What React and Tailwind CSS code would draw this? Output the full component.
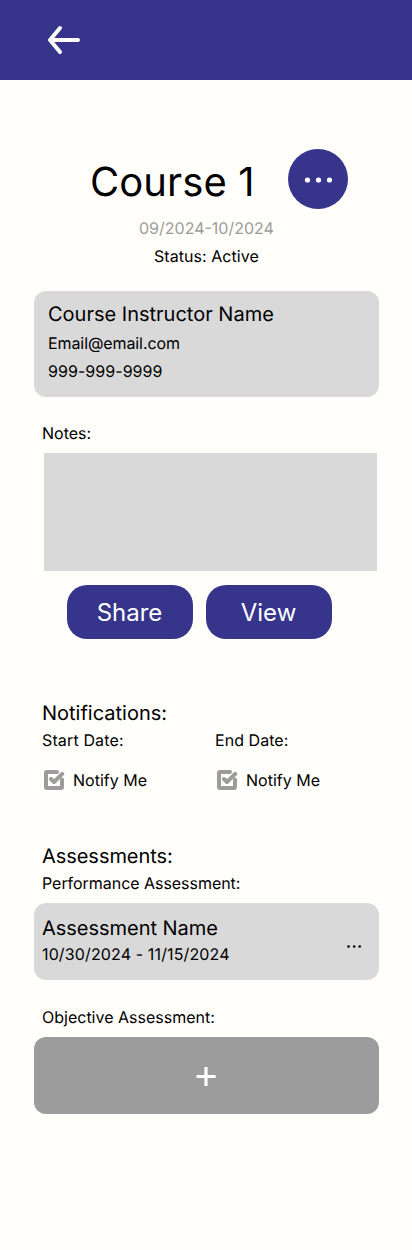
function BackArrow() {
  return (
    <svg width="36" height="32" viewBox="0 0 36 32" fill="none" stroke="white" strokeWidth="4" strokeLinecap="round" strokeLinejoin="round">
      <path d="M32 16H4.5M14 4 4 16l10 12" />
    </svg>
  );
}

function CheckIcon() {
  return (
    <svg width="22" height="22" viewBox="0 0 22 22" fill="none" stroke="#9c9c9c" strokeWidth="4" strokeLinecap="round" strokeLinejoin="round">
      <path d="M14 3H4a1 1 0 0 0-1 1v14a1 1 0 0 0 1 1h14a1 1 0 0 0 1-1v-7.5" />
      <path d="M8 10 11 13l8.2-8.2" />
    </svg>
  );
}

function Notify({ label, tracking }) {
  return (
    <div className="w-[173px] shrink-0">
      <p className={`leading-[19px] ${tracking}`}>{label}</p>
      <label className="mt-[19px] flex h-[22px] items-center gap-2 pl-px">
        <CheckIcon />
        <span className="leading-[19px]">Notify Me</span>
      </label>
    </div>
  );
}

export default function App() {
  return (
    <div className="h-[1250px] w-[412px] overflow-hidden bg-[#fffefb] font-['Inter',sans-serif] text-base text-black antialiased [text-rendering:geometricPrecision]">
      <header className="flex h-20 items-center bg-[#37348b] pl-[46px]">
        <button aria-label="Back"><BackArrow /></button>
      </header>
      <main className="pr-[33px] pl-[34px]">
        <div className="flex pt-[69px] pl-14">
          <h1 className="mt-[9px] w-[198px] text-[40px] leading-[48px] tracking-[0.08px]">Course 1</h1>
          <button aria-label="Course options" className="flex size-[60px] items-center justify-center rounded-full bg-[#37348b]">
            <svg width="28" height="6" viewBox="0 0 28 6" fill="white" className="mt-px">
              <circle cx="3.5" cy="3" r="2.6" /><circle cx="14.5" cy="3" r="2.6" /><circle cx="25.5" cy="3" r="2.6" />
            </svg>
          </button>
        </div>
        <p className="mt-[10px] pl-[105px] leading-[19px] text-[#9c9c9c]">09/2024-10/2024</p>
        <p className="mt-[9px] pl-[120px] leading-[19px] tracking-[0.05px]">Status: Active</p>

        <section className="mt-[25px] h-[106px] rounded-xl bg-[#d9d9d9] px-[14px] pt-[11px]">
          <h2 className="text-xl leading-6">Course Instructor Name</h2>
          <p className="mt-2 leading-[19px] tracking-[-0.09px]">Email@email.com</p>
          <p className="mt-[9px] leading-[19px] tracking-[0.05px]">999-999-9999</p>
        </section>

        <p className="mt-[27px] pl-2 leading-[19px]">Notes:</p>
        <div className="mt-[10px] mr-[2px] ml-[10px] h-[118px] bg-[#d9d9d9]" />
        <div className="mt-[14px] flex gap-[13px] pl-[33px] text-2xl leading-[29px] text-white">
          <button className="h-[54px] w-[126px] rounded-[20px] bg-[#37348b] pr-px">Share</button>
          <button className="h-[54px] w-[126px] rounded-[20px] bg-[#37348b] pr-px">View</button>
        </div>

        <section className="mt-[62px] pl-2">
          <h2 className="text-xl leading-6">Notifications:</h2>
          <div className="mt-[6px] flex">
            <Notify label="Start Date:" tracking="tracking-[0.14px]" />
            <Notify label="End Date:" tracking="tracking-[0.05px]" />
          </div>
        </section>

        <section className="mt-[53px]">
          <h2 className="pl-2 text-xl leading-6 tracking-[-0.05px]">Assessments:</h2>
          <p className="mt-[6px] pl-2 leading-[19px] tracking-[-0.04px]">Performance Assessment:</p>
          <div className="mt-[10px] flex h-[77px] justify-between rounded-xl bg-[#d9d9d9] pr-[17px] pl-2">
            <div className="pt-[13px]">
              <h3 className="text-xl leading-6 tracking-[-0.03px]">Assessment Name</h3>
              <p className="mt-[5px] leading-[19px] tracking-[0.13px]">10/30/2024 - 11/15/2024</p>
            </div>
            <button aria-label="Assessment options" className="mt-[42px] flex h-[3px] items-center">
              <svg width="16" height="3" viewBox="0 0 16 3" fill="black">
                <circle cx="2.5" cy="1.5" r="1.3" /><circle cx="8.2" cy="1.5" r="1.3" /><circle cx="13.7" cy="1.5" r="1.3" />
              </svg>
            </button>
          </div>
          <p className="mt-7 pl-2 leading-[19px]">Objective Assessment:</p>
          <button aria-label="Add assessment" className="mt-[10px] flex h-[77px] w-full items-center justify-center rounded-xl bg-[#9c9c9c]">
            <svg width="21" height="21" viewBox="0 0 21 21" stroke="white" strokeWidth="3.2" className="mt-px"><path d="M10 1v19M.5 10.5h19.2" /></svg>
          </button>
        </section>
      </main>
    </div>
  );
}
